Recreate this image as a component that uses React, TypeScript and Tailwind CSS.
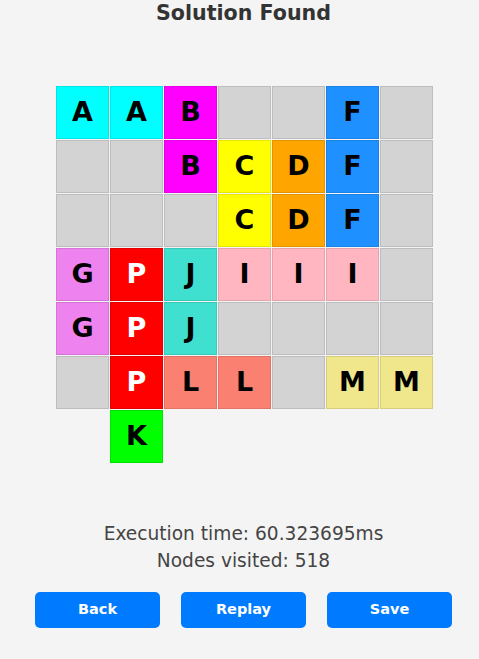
const colors: Record<string, string> = {
  A: 'bg-[#00ffff]',
  B: 'bg-[#ff00ff]',
  C: 'bg-[#ffff00]',
  D: 'bg-[#ffa500]',
  F: 'bg-[#1e90ff]',
  G: 'bg-[#ee82ee]',
  P: 'bg-[#ff0000]',
  J: 'bg-[#40e0d0]',
  I: 'bg-[#ffb6c1]',
  L: 'bg-[#fa8072]',
  M: 'bg-[#f0e68c]',
  K: 'bg-[#00ff00]',
  '.': 'bg-[#d3d3d3]',
};

const board = [
  'AAB..F.',
  '..BCDF.',
  '...CDF.',
  'GPJIII.',
  'GPJ....',
  '.PLL.MM',
  ' K     ',
];

function Cell({ ch }: { ch: string }) {
  if (ch === ' ') return <div className="w-[53px] h-[53px]" />;
  return (
    <div
      className={`w-[53px] h-[53px] border border-black/10 flex items-center justify-center text-[27px] font-bold ${colors[ch]} ${ch === 'P' ? 'text-white' : 'text-black'}`}
    >
      {ch === '.' ? '' : ch}
    </div>
  );
}

export default function App() {
  return (
    <div className="min-h-[659px] bg-[#f4f4f4] pl-[8px] flex flex-col items-center text-[#333]" style={{ fontFamily: '"DejaVu Sans", sans-serif' }}>
      <h1 className="text-[20.6px] font-bold leading-[26px] mt-0 text-[#333]">Solution Found</h1>
      <div className="mt-[60px] ml-[2px] grid grid-cols-7 gap-[1px]">
        {board.map((row, r) =>
          row.split('').map((ch, c) => <Cell key={`${r}-${c}`} ch={ch} />)
        )}
      </div>
      <div className="mt-[57px] text-center text-[18.6px] leading-[27px] text-[#444]">
        <p>Execution time: 60.323695ms</p>
        <p>Nodes visited: 518</p>
      </div>
      <div className="mt-[18px] flex gap-[21px]">
        {['Back', 'Replay', 'Save'].map((label) => (
          <button
            key={label}
            className="w-[125px] h-[36px] rounded-[5px] bg-[#007bff] text-white text-[14.5px] font-bold"
          >
            {label}
          </button>
        ))}
      </div>
    </div>
  );
}
